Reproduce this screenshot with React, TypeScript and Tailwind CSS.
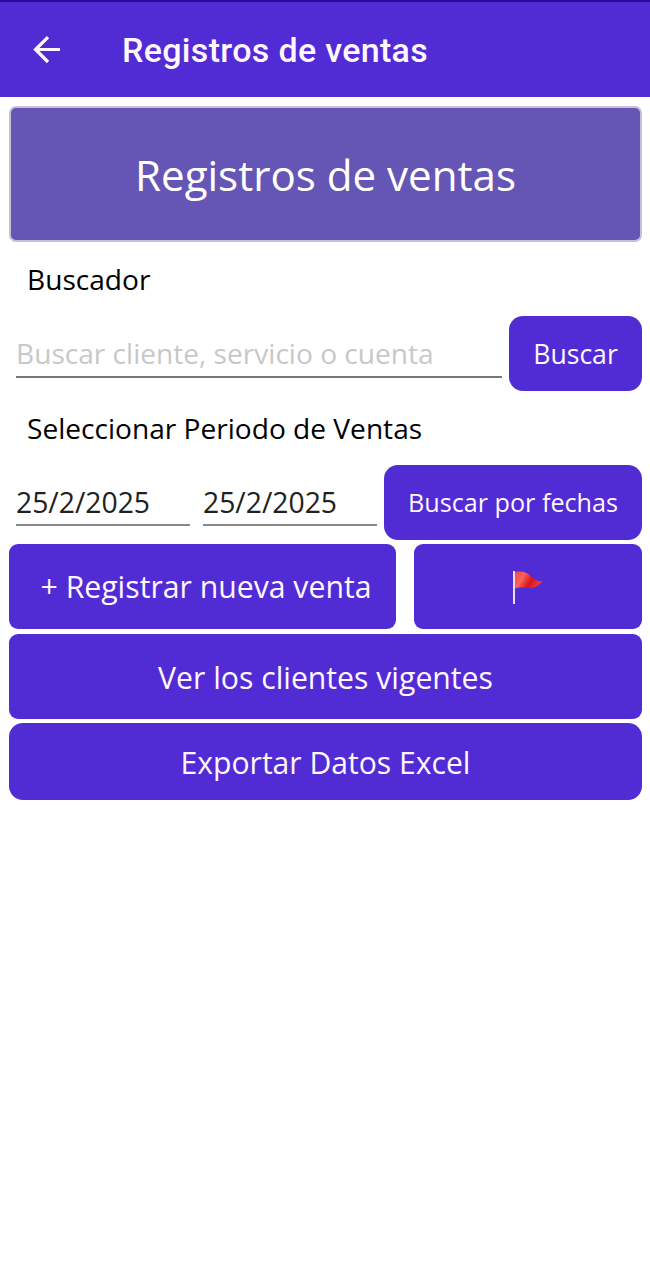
import { useState } from "react";

function Header() {
  return (
    <header className="flex h-[97px] items-center border-t-2 border-[#2b0b98] bg-[#512bd4] text-[#fff6ff]">
      <button aria-label="Volver" className="ml-[33px] w-[28px]">
        <svg viewBox="0 0 28 28" width="28" height="28" fill="none" stroke="currentColor" strokeWidth="3.2">
          <path d="M27 13.5H2.5M15 1.2L2.5 13.5L15 26" />
        </svg>
      </button>
      <h1 className="ml-[61px] whitespace-nowrap pt-px font-[Roboto,sans-serif] text-[34px] font-medium leading-none tracking-[0.32px]">
        Registros de ventas
      </h1>
    </header>
  );
}

function FlagIcon() {
  return (
    <svg viewBox="0 0 32 36" width="32" height="36">
      <defs>
        <linearGradient id="flag" x1="0" y1="0" x2="1" y2="0.35">
          <stop offset="0" stopColor="#ee4a48" />
          <stop offset="0.35" stopColor="#fb625c" />
          <stop offset="0.68" stopColor="#d9131c" />
          <stop offset="1" stopColor="#e8383e" />
        </linearGradient>
      </defs>
      <path d="M3 3C9 1.6 14 2.5 18 6.5C22 10.5 25 12 30.5 12.6C27.5 15 25.5 18.6 20 19C13 19.4 9 17.2 3 19.4Z" fill="url(#flag)" />
      <rect x="1" y="2" width="2" height="33" fill="#ecdcf6" />
    </svg>
  );
}

export default function App() {
  const [search, setSearch] = useState("");
  const [from, setFrom] = useState("25/2/2025");
  const [to, setTo] = useState("25/2/2025");

  return (
    <div className="min-h-[1280px] w-[650px] bg-white font-['Open_Sans',sans-serif]">
      <Header />

      <main className="flex flex-col pl-[9px] pr-2 pt-[9px]">
        <div className="flex h-[136px] items-center justify-center rounded-[7px] border-2 border-[#c5c0d4] bg-[#6556b5] pt-[2px] text-[42.1px] leading-none text-white">
          Registros de ventas
        </div>

        <p className="ml-[18px] flex h-[74px] items-center text-[28.1px] leading-none text-black">Buscador</p>

        <div className="flex h-[75px] gap-[7px]">
          <input
            value={search}
            onChange={(e) => setSearch(e.target.value)}
            placeholder="Buscar cliente, servicio o cuenta"
            className="ml-[7px] h-[62px] w-[486px] border-b-2 border-[#777777] pt-[14px] text-[28.1px] text-[#212121] outline-none placeholder:text-[#c8c8c8]"
          />
          <button className="flex-1 rounded-[14px] bg-[#512bd4] pt-[2px] text-[26.6px] text-[#fff6ff]">Buscar</button>
        </div>

        <p className="ml-[18px] flex h-[74px] items-center text-[28.1px] leading-none text-black">
          Seleccionar Periodo de Ventas
        </p>

        <div className="flex h-[75px]">
          <input
            value={from}
            onChange={(e) => setFrom(e.target.value)}
            className="ml-[7px] h-[61px] w-[174px] border-b-2 border-[#888888] pt-[14px] text-[28.3px] text-[#212121] outline-none"
          />
          <input
            value={to}
            onChange={(e) => setTo(e.target.value)}
            className="ml-[13px] mr-[7px] h-[61px] w-[174px] border-b-2 border-[#888888] pt-[14px] text-[28.3px] text-[#212121] outline-none"
          />
          <button className="flex-1 whitespace-nowrap rounded-[14px] bg-[#512bd4] text-[25.2px] text-[#fff6ff]">
            Buscar por fechas
          </button>
        </div>

        <div className="mt-1 flex h-[85px] gap-[18px]">
          <button className="w-[387px] whitespace-nowrap rounded-[9px] bg-[#512bd4] pl-[7px] pt-px text-[30.2px] text-[#fff6ff]">
            + Registrar nueva venta
          </button>
          <button aria-label="Pendientes" className="flex flex-1 items-center justify-center rounded-[9px] bg-[#512bd4]">
            <FlagIcon />
          </button>
        </div>

        <button className="mt-[5px] h-[85px] rounded-[9px] bg-[#512bd4] pt-[3px] text-[30.2px] text-[#fff6ff]">
          Ver los clientes vigentes
        </button>
        <button className="mt-1 h-[77px] rounded-[14px] bg-[#512bd4] pt-[2px] text-[30.1px] text-[#fff6ff]">
          Exportar Datos Excel
        </button>
      </main>
    </div>
  );
}
